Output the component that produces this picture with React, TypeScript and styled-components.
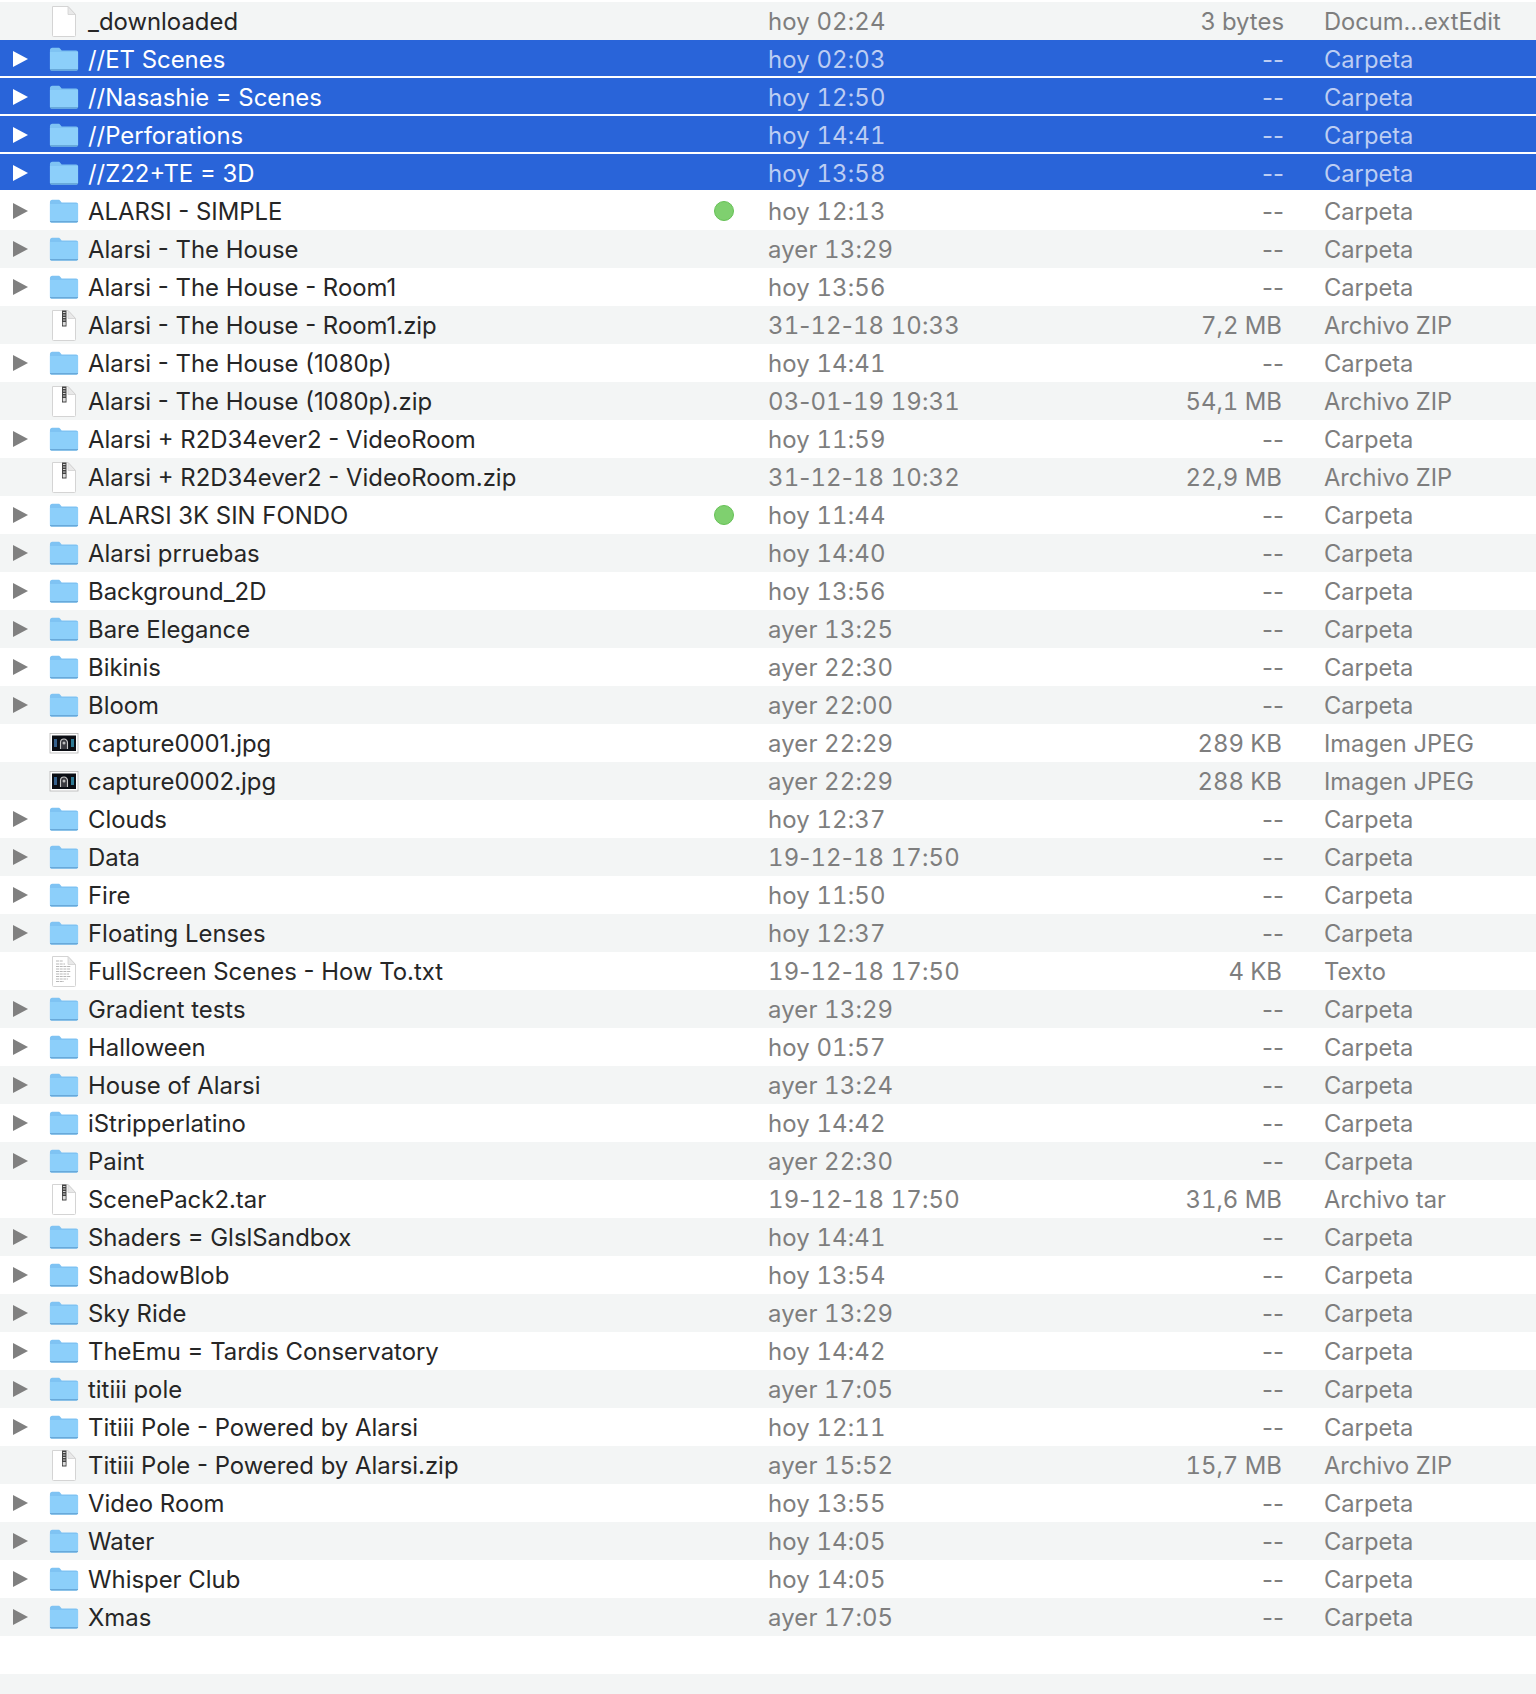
import React from "react";
import styled, { createGlobalStyle } from "styled-components";

type Kind = "doc" | "folder" | "zip" | "jpg" | "txt";
interface Entry {
  name: string;
  date: string;
  size: string;
  type: string;
  kind: Kind;
  selected?: boolean;
  tagged?: boolean;
}

const f = (name: string, date: string, extra: Partial<Entry> = {}): Entry => ({
  name,
  date,
  size: "--",
  type: "Carpeta",
  kind: "folder",
  ...extra,
});
const z = (name: string, date: string, size: string, type = "Archivo ZIP"): Entry => ({
  name,
  date,
  size,
  type,
  kind: "zip",
});

const entries: Entry[] = [
  { name: "_downloaded", date: "hoy 02:24", size: "3 bytes", type: "Docum…extEdit", kind: "doc" },
  f("//ET Scenes", "hoy 02:03", { selected: true }),
  f("//Nasashie = Scenes", "hoy 12:50", { selected: true }),
  f("//Perforations", "hoy 14:41", { selected: true }),
  f("//Z22+TE = 3D", "hoy 13:58", { selected: true }),
  f("ALARSI - SIMPLE", "hoy 12:13", { tagged: true }),
  f("Alarsi - The House", "ayer 13:29"),
  f("Alarsi - The House - Room1", "hoy 13:56"),
  z("Alarsi - The House - Room1.zip", "31-12-18 10:33", "7,2 MB"),
  f("Alarsi - The House (1080p)", "hoy 14:41"),
  z("Alarsi - The House (1080p).zip", "03-01-19 19:31", "54,1 MB"),
  f("Alarsi + R2D34ever2 - VideoRoom", "hoy 11:59"),
  z("Alarsi + R2D34ever2 - VideoRoom.zip", "31-12-18 10:32", "22,9 MB"),
  f("ALARSI 3K SIN FONDO", "hoy 11:44", { tagged: true }),
  f("Alarsi prruebas", "hoy 14:40"),
  f("Background_2D", "hoy 13:56"),
  f("Bare Elegance", "ayer 13:25"),
  f("Bikinis", "ayer 22:30"),
  f("Bloom", "ayer 22:00"),
  { name: "capture0001.jpg", date: "ayer 22:29", size: "289 KB", type: "Imagen JPEG", kind: "jpg" },
  { name: "capture0002.jpg", date: "ayer 22:29", size: "288 KB", type: "Imagen JPEG", kind: "jpg" },
  f("Clouds", "hoy 12:37"),
  f("Data", "19-12-18 17:50"),
  f("Fire", "hoy 11:50"),
  f("Floating Lenses", "hoy 12:37"),
  { name: "FullScreen Scenes - How To.txt", date: "19-12-18 17:50", size: "4 KB", type: "Texto", kind: "txt" },
  f("Gradient tests", "ayer 13:29"),
  f("Halloween", "hoy 01:57"),
  f("House of Alarsi", "ayer 13:24"),
  f("iStripperlatino", "hoy 14:42"),
  f("Paint", "ayer 22:30"),
  z("ScenePack2.tar", "19-12-18 17:50", "31,6 MB", "Archivo tar"),
  f("Shaders = GlslSandbox", "hoy 14:41"),
  f("ShadowBlob", "hoy 13:54"),
  f("Sky Ride", "ayer 13:29"),
  f("TheEmu = Tardis Conservatory", "hoy 14:42"),
  f("titiii pole", "ayer 17:05"),
  f("Titiii Pole - Powered by Alarsi", "hoy 12:11"),
  z("Titiii Pole - Powered by Alarsi.zip", "ayer 15:52", "15,7 MB"),
  f("Video Room", "hoy 13:55"),
  f("Water", "hoy 14:05"),
  f("Whisper Club", "hoy 14:05"),
  f("Xmas", "ayer 17:05"),
];

const Global = createGlobalStyle`
  html, body { margin: 0; padding: 0; background: #fff; }
  body { font-family: Inter, "Liberation Sans", sans-serif; }
`;

const Page = styled.div`
  width: 1536px;
  height: 1694px;
  padding-top: 2px;
  box-sizing: border-box;
  overflow: hidden;
  background: #fff;
`;

const Row = styled.div<{ $striped: boolean; $selected: boolean }>`
  display: grid;
  grid-template-columns: 49px 39px 616px 40px 356px 184px 1fr;
  align-items: center;
  height: 38px;
  box-sizing: border-box;
  font-size: 23.9px;
  line-height: 36px;
  background: ${(p) => (p.$selected ? "#2964d9" : p.$striped ? "#f3f5f5" : "#fff")};
  box-shadow: ${(p) => (p.$selected ? "inset 0 -2px 0 #fff" : "none")};
`;

const Spacer = styled.div`
  height: 38px;
  background: #fff;
`;

const StripeEnd = styled.div`
  height: 20px;
  background: #f3f5f5;
`;

const Disclosure = styled.svg`
  display: block;
  margin-left: 13px;
  width: 15px;
  height: 16px;
`;

const IconBox = styled.div`
  width: 30px;
  height: 32px;
  display: flex;
  align-items: center;
  justify-content: center;
`;

const Name = styled.div<{ $selected: boolean }>`
  padding-top: 2px;
  color: ${(p) => (p.$selected ? "#fff" : "#262626")};
  white-space: nowrap;
`;

const TagCell = styled.div`
  display: flex;
  justify-content: center;
`;

const TagDot = styled.span`
  width: 18px;
  height: 18px;
  border-radius: 50%;
  background: #7fd06f;
  border: 1px solid #66c156;
`;

const Secondary = styled.div<{ $selected: boolean }>`
  padding-top: 2px;
  color: ${(p) => (p.$selected ? "#bccdf3" : "#7e7e7e")};
  white-space: nowrap;
`;

const DateCell = styled(Secondary)`
  padding-left: 24px;
  font-variant-numeric: tabular-nums;
  letter-spacing: 0.15px;
`;

const Dash = styled.span`
  font-variant-numeric: normal;
`;

const SizeCell = styled(Secondary)<{ $inset: boolean }>`
  text-align: right;
  padding-right: ${(p) => (p.$inset ? "2px" : "0")};
  font-variant-numeric: ${(p) => (p.$inset ? "tabular-nums" : "normal")};
`;

const TypeCell = styled(Secondary)`
  padding-left: 40px;
  font-size: 23.7px;
`;

const FolderIcon = () => (
  <svg width="32" height="26" viewBox="0 0 32 26">
    <path d="M1 3.500C1 2 2 1 3.500 1h6.500c1 0 1.500.4 2.200 1.200L13.500 4H29c1.200 0 2 .8 2 2v17.500c0 1-.8 1.700-1.800 1.700H2.800c-1 0-1.800-.7-1.800-1.700z" fill="#7fc3f3" />
    <path d="M1 5.500h30v17.800c0 1-.7 1.700-1.700 1.700H2.700C1.700 25 1 24.300 1 23.300z" fill="#8ccffa" />
    <path d="M1 23.600h30v.3c0 .7-.6 1.300-1.400 1.300H2.400C1.600 25.200 1 24.600 1 23.900z" fill="#68a9da" />
  </svg>
);

const PageIcon = ({ children }: { children?: React.ReactNode }) => (
  <svg width="26" height="33" viewBox="0 0 26 33">
    <path d="M1.500 1.500h15.500l7.500 8V30.500a1 1 0 0 1-1 1h-21a1 1 0 0 1-1-1z" fill="#fff" stroke="#d4d4d4" strokeWidth="1" />
    <path d="M17 1.500v8h7.500z" fill="#e9e9e9" stroke="#d0d0d0" strokeWidth="0.8" />
    {children}
  </svg>
);

const ZipIcon = () => (
  <PageIcon>
    <rect x="11" y="1.500" width="4.500" height="16" fill="#444" />
    <path d="M12 3.500h2.500M12 6h2.500M12 8.500h2.500M12 11h2.500" stroke="#e2e2e2" strokeWidth="0.9" />
    <rect x="11.800" y="13" width="2.900" height="3.500" rx="0.6" fill="#ddd" />
  </PageIcon>
);

const TxtIcon = () => (
  <PageIcon>
    <path
      d="M5 6h7M5 9h9M5 11.500h15M5 14h14M5 16.500h15M5 19h13M5 21.500h15M5 24h12M5 26.500h8"
      stroke="#b8b8b8"
      strokeWidth="1"
      strokeDasharray="3 .7"
    />
  </PageIcon>
);

const JpgIcon = () => (
  <svg width="30" height="21" viewBox="0 0 30 21">
    <rect x="1" y="0.500" width="28" height="19.500" fill="#fff" stroke="#b5b5b5" strokeWidth="0.8" />
    <rect x="3" y="2.500" width="24" height="15.500" fill="#0b0e14" />
    <rect x="5" y="6" width="3" height="8" fill="#35608c" />
    <rect x="22" y="6" width="3" height="8" fill="#2f7a94" />
    <path d="M11.500 16V9.500a3.500 3.500 0 0 1 7 0V16" fill="#3a3a40" stroke="#c9c9c9" strokeWidth="1.100" />
    <circle cx="15" cy="10" r="1.500" fill="#bdbdbd" />
  </svg>
);

const icons: Record<Kind, React.ReactElement> = {
  doc: <PageIcon />,
  folder: <FolderIcon />,
  zip: <ZipIcon />,
  jpg: <JpgIcon />,
  txt: <TxtIcon />,
};

const renderDate = (date: string) =>
  date.split("-").map((part, i) => (
    <React.Fragment key={i}>
      {i > 0 && <Dash>-</Dash>}
      {part}
    </React.Fragment>
  ));

export default function App() {
  return (
    <Page>
      <Global />
      {entries.map((e, i) => {
        const selected = !!e.selected;
        return (
          <Row key={e.name + i} $striped={i % 2 === 0} $selected={selected}>
            {e.kind === "folder" ? (
              <Disclosure viewBox="0 0 15 16">
                <path d="M0 0l15 8L0 16z" fill={selected ? "#fff" : "#808080"} />
              </Disclosure>
            ) : (
              <span />
            )}
            <IconBox>{icons[e.kind]}</IconBox>
            <Name $selected={selected}>{e.name}</Name>
            <TagCell>{e.tagged && <TagDot />}</TagCell>
            <DateCell $selected={selected}>{renderDate(e.date)}</DateCell>
            <SizeCell $selected={selected} $inset={/B$/.test(e.size)}>
              {e.size}
            </SizeCell>
            <TypeCell $selected={selected}>{e.type}</TypeCell>
          </Row>
        );
      })}
      <Spacer />
      <StripeEnd />
    </Page>
  );
}
